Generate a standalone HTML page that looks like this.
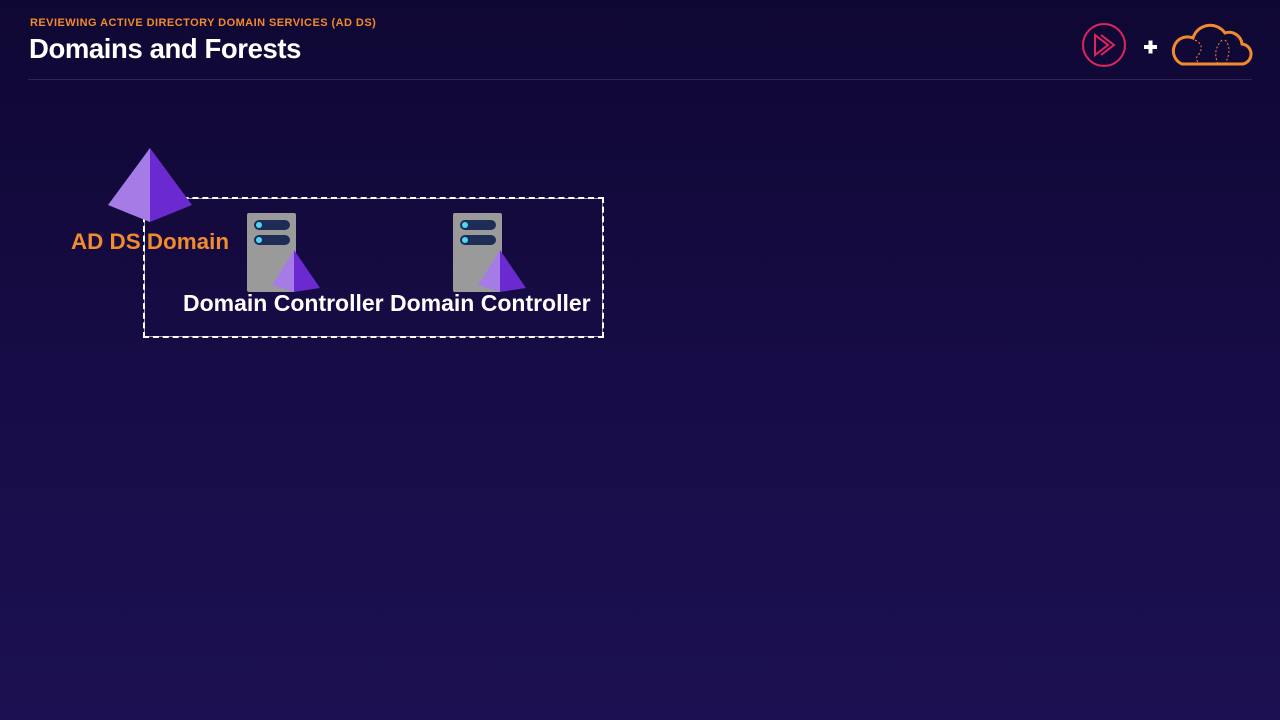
<!DOCTYPE html>
<html><head><meta charset="utf-8"><style>
html,body{margin:0;padding:0}
body{width:1280px;height:720px;overflow:hidden;position:relative;background:linear-gradient(180deg,#0f0733 0%,#170c45 50%,#1c1052 100%);font-family:"Liberation Sans",sans-serif}
.sub{position:absolute;left:30px;top:17px;color:#f28a2e;font-size:11px;font-weight:bold;letter-spacing:.45px}
.title{position:absolute;left:29px;top:33px;color:#fff;font-size:27.5px;font-weight:bold;letter-spacing:-.4px}
.rule{position:absolute;left:28px;top:79px;width:1224px;height:1px;background:#2d2358}
.box{position:absolute;left:143px;top:197px;width:457px;height:137px;border:2px dashed #fff;outline:1px solid rgba(255,255,255,.6);outline-offset:-2px}
.t{position:absolute;font-weight:bold;font-size:23px;color:#fff;white-space:nowrap}
</style></head><body>
<div class="sub">REVIEWING ACTIVE DIRECTORY DOMAIN SERVICES (AD DS)</div>
<div class="title">Domains and Forests</div>
<div class="rule"></div>
<div class="box"></div>
<svg width="1280" height="720" style="position:absolute;left:0;top:0">
<polygon points="150,148 108,205 150,222" fill="#a57ce6"/>
<polygon points="150,148 192,205 150,222" fill="#6a2ad0"/>
<g id="s1">
<rect x="247" y="213" width="49" height="79" rx="2" fill="#9a9a9a"/>
<rect x="254" y="220" width="36" height="10" rx="5" fill="#1e2d55"/>
<rect x="254" y="235" width="36" height="10" rx="5" fill="#1e2d55"/>
<circle cx="259" cy="225" r="3" fill="#4fd6f6"/><circle cx="259" cy="240" r="3" fill="#4fd6f6"/>
<polygon points="294,250 272,285 294,292" fill="#a57ce6"/>
<polygon points="294,250 320,288 294,292" fill="#6a2ad0"/>
</g>
<use href="#s1" x="206"/>
<circle cx="1104" cy="45" r="21" fill="none" stroke="#e0245e" stroke-width="2"/>
<path d="M1095 35 L1108 45 L1095 55 Z M1101 35 L1114 45 L1101 55" fill="none" stroke="#e0245e" stroke-width="2"/>
<path d="M1144 47h13M1150.5 40.5v13" stroke="#fff" stroke-width="4"/>
<path d="M1182 64 h58 a10 10 0 0 0 2 -20 a13 13 0 0 0 -17 -11 a18 18 0 0 0 -32 5 a13 13 0 0 0 -11 26 Z" fill="none" stroke="#f28a2e" stroke-width="3"/>
<path d="M1195 40 q10 5 4 14 q-6 6 2 10 M1222 40 q-10 10 -4 24 M1225 40 q8 8 0 24" fill="none" stroke="#f28a2e" stroke-width="1" stroke-dasharray="2 2"/>
</svg>
<div class="t" style="left:71px;top:229px;color:#f28a2e;font-size:22.4px">AD DS Domain</div>
<div class="t" style="left:183px;top:290px">Domain Controller</div>
<div class="t" style="left:390px;top:290px">Domain Controller</div>
</body></html>
